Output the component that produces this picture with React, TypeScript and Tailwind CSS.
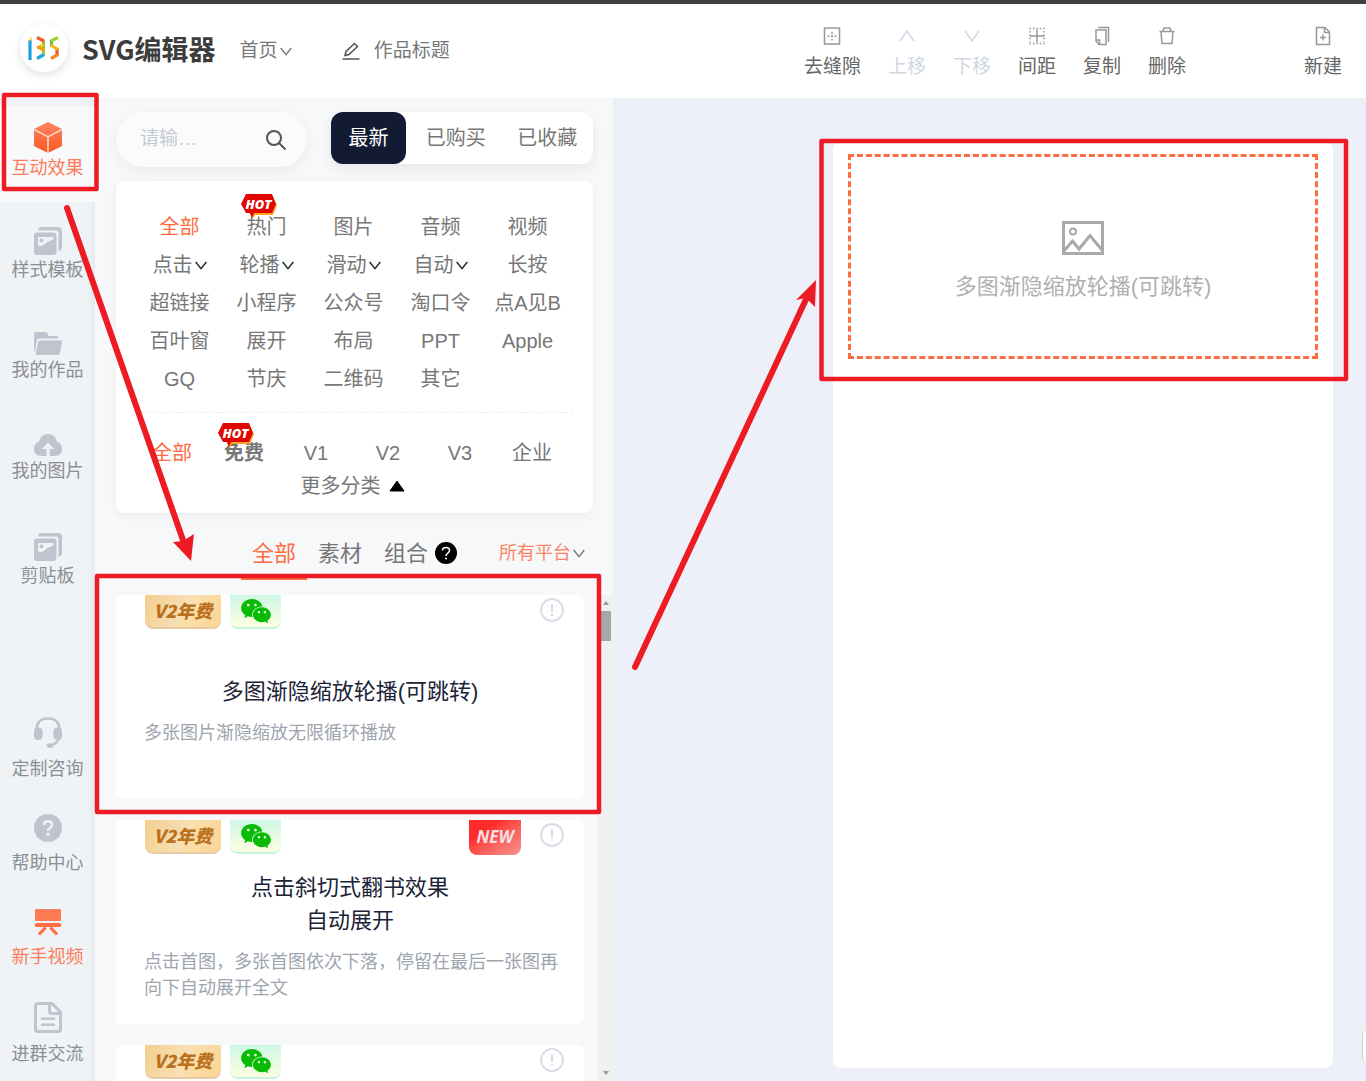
import { useState } from "react";
import type { ReactNode } from "react";
import clsx from "clsx";
import { AiFillWechat } from "react-icons/ai";

const CATEGORIES = [
  { label: "全部" },
  { label: "热门", hot: true },
  { label: "图片" },
  { label: "音频" },
  { label: "视频" },
  { label: "点击", menu: true },
  { label: "轮播", menu: true },
  { label: "滑动", menu: true },
  { label: "自动", menu: true },
  { label: "长按" },
  { label: "超链接" },
  { label: "小程序" },
  { label: "公众号" },
  { label: "淘口令" },
  { label: "点A见B" },
  { label: "百叶窗" },
  { label: "展开" },
  { label: "布局" },
  { label: "PPT" },
  { label: "Apple" },
  { label: "GQ" },
  { label: "节庆" },
  { label: "二维码" },
  { label: "其它" },
];

const LEVELS = ["全部", "免费", "V1", "V2", "V3", "企业"];

const EFFECTS = [
  {
    id: 1,
    title: ["多图渐隐缩放轮播(可跳转)"],
    desc: "多张图片渐隐缩放无限循环播放",
    isNew: false,
  },
  {
    id: 2,
    title: ["点击斜切式翻书效果", "自动展开"],
    desc: "点击首图，多张首图依次下落，停留在最后一张图再向下自动展开全文",
    isNew: true,
  },
  { id: 3, title: [], desc: "", isNew: false },
];

function Chevron({ className }: { className?: string }) {
  return (
    <svg viewBox="0 0 12 9" className={clsx("h-[9px] w-3 shrink-0", className)} fill="none" stroke="currentColor">
      <path d="M0.7 1 L6 7.6 L11.3 1" strokeWidth="1.4" />
    </svg>
  );
}

function HotBadge({ className }: { className?: string }) {
  return (
    <svg viewBox="0 0 36 25" className={clsx("absolute h-[25px] w-9", className)} aria-label="HOT">
      <path d="M6 2 H31.5 L36 11 L32 21 H14 L11.5 25 L9 20 Z" fill="#f6a623" />
      <path d="M5 0 H31 L35 10 L31 19 H13 L11 24 L9 19 H5 L0 10 Z" fill="#e10602" />
      <text
        x="17.5"
        y="14.5"
        textAnchor="middle"
        fill="#fff"
        fontSize="13"
        fontWeight="800"
        fontStyle="italic"
        fontFamily="Open Sans, sans-serif"
      >
        HOT
      </text>
    </svg>
  );
}

function Logo() {
  return (
    <div className="mb-1.5 flex size-12 items-center justify-center rounded-full bg-white shadow-[0_3px_8px_rgba(0,0,0,0.12)]">
      <svg viewBox="0 0 32 24" className="h-6 w-8" fill="none" strokeWidth="3.200">
        <path d="M2 4 V24" stroke="#1d9de8" />
        <path d="M0.500 5 L3.500 0.500 V4.500 Z" fill="#f8c90e" stroke="none" />
        <path d="M15.500 4 V12" stroke="#8cc63f" />
        <path d="M15.500 12 V20" stroke="#a3cf3a" />
        <path d="M9 1.500 L16 5" stroke="#f0592b" />
        <path d="M9 12.500 L15.500 8.500" stroke="#f8c90e" />
        <path d="M9.500 10.500 L16 14.500" stroke="#f39a1e" />
        <path d="M16 18.500 L9 22.500" stroke="#21a6d9" />
        <path d="M23.500 4 V11" stroke="#5dba47" />
        <path d="M30 1.500 L23 5" stroke="#a3cf3a" />
        <path d="M29 12 V20" stroke="#ef4a2b" />
        <path d="M22.500 9 L30 13.500" stroke="#f6b81a" />
        <path d="M30 18.500 L23 22.500" stroke="#f2862a" />
      </svg>
    </div>
  );
}

const cubeIcon = (
  <svg viewBox="0 0 28 31" className="h-[31px] w-7">
    <defs>
      <linearGradient id="cube" x1="0" y1="0" x2="0" y2="1">
        <stop offset="0" stopColor="#fd8663" />
        <stop offset="1" stopColor="#fd561f" />
      </linearGradient>
    </defs>
    <path d="M14 0 L28 7 V24 L14 31 L0 24 V7 Z" fill="url(#cube)" />
    <path d="M0 7.5 L14 15 L28 7.5 M14 15 V31" stroke="#fbd9cd" strokeWidth="1.5" fill="none" />
  </svg>
);

const albumIcon = (
  <svg viewBox="0 0 28 28" className="size-7" fill="#c0c4ce">
    <path d="M7 0 H24 Q28 0 28 4 V20 Q28 23 24.5 24 V6 Q24.5 3.5 22 3.5 H4 Q4.5 0 7 0 Z" />
    <path
      fillRule="evenodd"
      d="M3 5.5 H19.5 Q22.5 5.5 22.5 8.5 V25 Q22.5 28 19.5 28 H3 Q0 28 0 25 V8.5 Q0 5.5 3 5.5 Z M4 10 V18 Q8 21 12 16 Q14.500 14 19.500 12.500 V10 Z"
    />
    <circle cx="7.5" cy="13.5" r="2" />
  </svg>
);

const folderIcon = (
  <svg viewBox="0 0 28 23" className="h-[23px] w-7" fill="#c0c4ce">
    <path d="M0 1.500 Q0 0 1.500 0 H11 Q13 0 13.500 1.500 L14.500 4 H23 Q24.500 4 24.500 6.500 H5 Q3.500 6.500 3 8 L1 19 H0 Z" />
    <path d="M6 8.500 H26.500 Q28.300 8.500 28 10.500 L25.800 21 Q25.400 23 23.500 23 H2.500 Q1.500 23 1.700 21.500 L4 10.500 Q4.500 8.500 6 8.500 Z" />
  </svg>
);

const cloudIcon = (
  <svg viewBox="0 0 28 22" className="h-[22px] w-7" fill="#c0c4ce">
    <path d="M12.500 22 H7 Q0 22 0 15 Q0 9 5 7.500 Q7 0 14 0 Q21 0 23 7.500 Q28 9 28 15 Q28 22 21 22 H15.800 V15 H20 L14 8.500 L8 15 H12.500 Z" />
  </svg>
);

const headsetIcon = (
  <svg viewBox="0 0 28 31" className="h-[31px] w-7">
    <path d="M2.500 14 V12 Q3 1.500 14 1.500 Q25 1.500 25.500 12 V20 Q24 26 17 28.500" fill="none" stroke="#c0c4ce" strokeWidth="2.500" />
    <rect x="0" y="10.500" width="8.500" height="12.500" rx="4" fill="#c0c4ce" />
    <rect x="19.500" y="10.500" width="8.500" height="12.500" rx="4" fill="#c0c4ce" />
    <ellipse cx="16" cy="28.500" rx="3.500" ry="2.300" fill="#c0c4ce" />
  </svg>
);

const helpIcon = (
  <svg viewBox="0 0 28 28" className="size-7">
    <circle cx="14" cy="14" r="14" fill="#c0c4ce" />
    <path d="M10 11 Q10 7.300 14 7.300 Q18 7.300 18 10.800 Q18 12.800 15.800 14 Q14 15 14 16.800" fill="none" stroke="#eff3f5" strokeWidth="2.600" />
    <circle cx="14" cy="20.300" r="1.700" fill="#eff3f5" />
  </svg>
);

const boardIcon = (
  <svg viewBox="0 0 26 27" className="h-[27px] w-[26px]">
    <rect width="26" height="12" rx="1" fill="#fd7a55" />
    <rect y="14" width="26" height="4" rx="1.500" fill="#fd6c42" />
    <path d="M10.500 18.500 L4 25.500 M15.500 18.500 L22 25.500" stroke="#fd6c42" strokeWidth="3.200" />
  </svg>
);

const docIcon = (
  <svg viewBox="0 0 28 31" className="h-[31px] w-7" fill="none" stroke="#c0c4ce" strokeWidth="3">
    <path d="M17 1.500 H4 Q1.500 1.500 1.500 4 V27 Q1.500 29.500 4 29.500 H24 Q26.500 29.500 26.500 27 V10 L18 1.500 Z" strokeLinejoin="round" />
    <path d="M15.500 2 V9 Q15.500 11.500 18 11.500 H26" />
    <path d="M8 16.800 H20 M8 22.800 H20" strokeLinecap="round" strokeWidth="2.500" />
  </svg>
);

const MAIN_NAV = [
  { label: "互动效果", icon: cubeIcon, active: true },
  { label: "样式模板", icon: albumIcon },
  { label: "我的作品", icon: folderIcon },
  { label: "我的图片", icon: cloudIcon },
  { label: "剪贴板", icon: albumIcon },
];

const HELP_NAV = [
  { label: "定制咨询", icon: headsetIcon },
  { label: "帮助中心", icon: helpIcon },
  { label: "新手视频", icon: boardIcon, active: true },
  { label: "进群交流", icon: docIcon },
];

const TOOLS = [
  {
    label: "去缝隙",
    icon: (
      <>
        <rect x="2.500" y="2" width="15" height="16" />
        <path d="M10 6 V14.500 M5.500 10 H15" strokeDasharray="2 1.500" />
      </>
    ),
  },
  { label: "上移", disabled: true, icon: <path d="M3 15 L10 5 L17 15" /> },
  { label: "下移", disabled: true, icon: <path d="M3 5 L10 15 L17 5" /> },
  {
    label: "间距",
    icon: (
      <>
        <path d="M10 3.500 V16.500 M3 10 H17" />
        <path d="M2.500 2.500 H18 M2.500 17.500 H18 M3 5 V16 M17 5 V16" strokeDasharray="1.500 1.900" />
      </>
    ),
  },
  {
    label: "复制",
    icon: (
      <>
        <path d="M4 4 H14 V18.500 H7 L4 15 Z M4 14 H7.500 V18" />
        <path d="M6 1.500 H16.500 V16" />
      </>
    ),
  },
  {
    label: "删除",
    icon: <path d="M2.500 5.500 H17.500 M6 5.500 L7 2 H13 L14 5.500 M4 5.500 L5 17.500 H15 L16 5.500" />,
  },
];

const newFileIcon = (
  <>
    <path d="M3.500 1.500 H12 L16.500 6 V18.500 H3.500 Z M11.500 1.500 V6.500 H16.500" />
    <path d="M10 8.500 V14.500 M7 11.500 H13" />
  </>
);

function ToolButton({ label, icon, disabled }: { label: string; icon: ReactNode; disabled?: boolean }) {
  return (
    <button
      disabled={disabled}
      className={clsx("flex flex-col items-center gap-[7px]", disabled ? "text-[#cfd8e2]" : "text-[#666]")}
    >
      <svg
        viewBox="0 0 20 20"
        className={clsx("size-5", !disabled && "text-[#999]")}
        fill="none"
        stroke="currentColor"
        strokeWidth="1.500"
      >
        {icon}
      </svg>
      <span className="text-[19px] leading-7">{label}</span>
    </button>
  );
}

function NavItem({ label, icon, active }: { label: string; icon: ReactNode; active?: boolean }) {
  return (
    <>
      {icon}
      <span className={clsx("text-[18px] leading-[30px]", active ? "text-[#fc7b5b]" : "text-[#8b8f94]")}>
        {label}
      </span>
    </>
  );
}

function EffectCard({ title, desc, isNew }: { title: string[]; desc: string; isNew: boolean }) {
  return (
    <article className="flex h-[204px] shrink-0 flex-col rounded-md bg-white">
      <div className="flex items-start gap-[9px] pr-5 pl-[29px]">
        <span className="h-[34px] w-[76px] rounded-b-lg border-b-2 border-[#e6cba6] bg-[linear-gradient(115deg,#f3cf8d_0%,#f8e0b8_55%,#fbdfa8_56%,#fad596_100%)] text-center font-['Noto_Sans_CJK_SC',sans-serif] text-[18px] leading-[30px] font-black whitespace-nowrap text-[#b9701f] italic">
          V2年费
        </span>
        <span className="flex h-[34px] w-[51px] items-center justify-center rounded-b-lg border-b-2 border-[#c9f2de] bg-linear-to-b from-[#cdf8e6] to-[#fdfde0]">
          <AiFillWechat className="size-[34px] text-[#09bb07]" />
        </span>
        <span className="flex-1" />
        {isNew && (
          <span className="mr-2.5 h-[35px] w-[52px] rounded-b-lg bg-linear-to-br from-[#fe2b2b] from-30% to-[#f49090] text-center font-['Open_Sans',sans-serif] text-[17px] leading-[34px] font-bold text-[#f3dfe2] italic">
            NEW
          </span>
        )}
        <button aria-label="说明" className="mt-[3px] text-[#d9dee8]">
          <svg viewBox="0 0 24 24" className="size-6" fill="none" stroke="currentColor" strokeWidth="2">
            <circle cx="12" cy="12" r="11" />
            <path d="M12 6 V14 M12 16 V18" />
          </svg>
        </button>
      </div>
      {title.length > 0 && (
        <div className="flex flex-1 flex-col justify-center gap-3 pr-6 pb-2 pl-7">
          <h3 className="pr-1 text-center text-[22px] leading-[33px] text-[#1b2337]">
            {title.map((line) => (
              <span key={line} className="block">
                {line}
              </span>
            ))}
          </h3>
          <p className="text-[18px] leading-[26px] text-[#9ea5ae]">{desc}</p>
        </div>
      )}
    </article>
  );
}

function Annotations() {
  return (
    <svg
      className="pointer-events-none absolute inset-0 h-full w-full"
      fill="none"
      stroke="#ed1c24"
      strokeWidth="4.500"
      strokeLinejoin="round"
    >
      <rect x="4" y="95" width="92.500" height="94" />
      <rect x="97" y="576" width="502" height="236" />
      <rect x="821.500" y="141" width="524.500" height="238" />
      <path d="M67 208 L184 543" strokeWidth="6" strokeLinecap="round" />
      <path d="M191 561 L173 542 L183 541 L194 534 Z" fill="#ed1c24" stroke="none" />
      <path d="M635 667 L808 295" strokeWidth="6" strokeLinecap="round" />
      <path d="M816 280 L796 300 L806 298 L815 307 Z" fill="#ed1c24" stroke="none" />
    </svg>
  );
}

export default function App() {
  const [category, setCategory] = useState("全部");
  const [level, setLevel] = useState("全部");

  return (
    <div className="relative flex h-screen flex-col overflow-hidden bg-[#edf0f8] font-['Liberation_Sans','Noto_Sans_CJK_SC',sans-serif] text-[#777]">
      {/* Header */}
      <header className="flex h-[98px] shrink-0 items-center border-t-4 border-[#404040] bg-white pr-6 pl-5">
        <Logo />
        <h1 className="ml-3.5 pb-1 font-['Noto_Sans_CJK_SC',sans-serif] text-[27px] font-bold whitespace-nowrap text-[#3c3c3c]">
          SVG编辑器
        </h1>
        <button className="ml-6 flex items-center gap-0.5 text-[19px]">
          首页
          <Chevron />
        </button>
        <label className="ml-[50px] flex items-center gap-3.5">
          <svg viewBox="0 0 18 18" className="size-[18px]" fill="none" stroke="#555" strokeWidth="1.500">
            <path d="M0.500 17 H17.500 M3 13.500 L4 9.500 L12.500 1.500 L15.500 4.500 L7 12.500 Z" />
          </svg>
          <input aria-label="作品标题" defaultValue="作品标题" className="w-24 text-[19px] outline-none" />
        </label>
        <div className="ml-auto flex gap-[27px] pt-1">
          {TOOLS.map((tool) => (
            <ToolButton key={tool.label} {...tool} />
          ))}
          <div className="ml-[91px]">
            <ToolButton label="新建" icon={newFileIcon} />
          </div>
        </div>
      </header>

      <div className="flex min-h-0 flex-1">
        {/* Left navigation */}
        <nav className="flex w-[95px] shrink-0 flex-col bg-[#eff3f5] pt-2 shadow-[inset_-12px_0_10px_-8px_rgba(0,0,0,0.04)]">
          <div className="flex flex-col gap-0.5">
            {MAIN_NAV.map((item) => (
              <a
                key={item.label}
                href="#"
                className={clsx(
                  "flex flex-col items-center justify-center",
                  item.active ? "h-24 bg-[#f7f9fa] pb-1" : "h-[100px] pt-1"
                )}
              >
                <NavItem {...item} />
              </a>
            ))}
          </div>
          <div className="mt-auto">
            {HELP_NAV.map((item) => (
              <a key={item.label} href="#" className="flex h-[95px] flex-col items-center justify-center gap-1.5 pt-1">
                <NavItem {...item} />
              </a>
            ))}
          </div>
        </nav>

        {/* Effect library */}
        <section className="flex w-[518px] shrink-0 flex-col bg-[#f7f8fa] pt-3.5">
          <div className="flex items-start pr-5 pl-[21px]">
            <div className="flex h-[55px] w-[191px] items-center rounded-full bg-[#fbfbfc] pr-5 pl-6 shadow-[0_4px_14px_rgba(0,0,0,0.06)]">
              <input
                aria-label="搜索"
                placeholder="请输…"
                className="min-w-0 flex-1 text-[19px] outline-none placeholder:text-[#c3c9d3]"
              />
              <button aria-label="搜索">
                <svg viewBox="0 0 22 22" className="size-[22px]" fill="none" stroke="#555" strokeWidth="2">
                  <circle cx="9" cy="9" r="7" />
                  <path d="M14 14 L20.500 20.500" />
                </svg>
              </button>
            </div>
            <div className="ml-6 flex h-[52px] flex-1 items-center rounded-xl bg-white text-[20px] shadow-[0_5px_14px_rgba(0,0,0,0.07)]">
              <button className="h-full w-[75px] rounded-xl bg-[#131b33] text-white">最新</button>
              <button className="flex-1 pl-1">已购买</button>
              <button className="flex-1">已收藏</button>
            </div>
          </div>

          {/* Filters */}
          <div className="mt-3.5 mr-5 ml-[21px] rounded-lg bg-white px-5 pt-[27px] pb-3 text-[20px] shadow-[0_3px_10px_rgba(0,0,0,0.05)]">
            <div className="grid grid-cols-[repeat(5,87px)]">
              {CATEGORIES.map((item) => (
                <button
                  key={item.label}
                  onClick={() => setCategory(item.label)}
                  className={clsx(
                    "relative flex h-[38px] items-center justify-center gap-0.5 whitespace-nowrap",
                    category === item.label && "text-[#fd6c42]"
                  )}
                >
                  {item.label}
                  {item.menu && <Chevron className="text-[#222]" />}
                  {item.hot && <HotBadge className="-top-3.5 left-[18px]" />}
                </button>
              ))}
            </div>
            <div className="mt-3.5 border-t border-dashed border-[#eee]" />
            <div className="mt-[22px] flex">
              {LEVELS.map((item) => (
                <button
                  key={item}
                  onClick={() => setLevel(item)}
                  className={clsx(
                    "relative h-9 w-[72px]",
                    level === item && "text-[#fd6c42]",
                    item === "免费" && "font-bold"
                  )}
                >
                  {item}
                  {item === "免费" && <HotBadge className="-top-3 left-2.5" />}
                </button>
              ))}
            </div>
            <button className="mx-auto flex h-[30px] items-center gap-2 pr-1">
              更多分类
              <svg viewBox="0 0 16 12" className="h-3 w-4">
                <path d="M8 1 L15 11 H1 Z" fill="#000" stroke="#000" strokeLinejoin="round" />
              </svg>
            </button>
          </div>

          {/* Material type tabs */}
          <div className="mt-[13px] mr-5 ml-[21px] flex h-[54px] items-center pl-[125px] text-[22px]">
            <button className="h-full w-[66px] border-b-3 border-[#fd6c42] pt-1 text-[#fd6c42]">全部</button>
            <button className="w-[66px]">素材</button>
            <button className="w-[66px]">组合</button>
            <svg viewBox="0 0 22 22" className="-ml-1 size-[22px]">
              <circle cx="11" cy="11" r="11" fill="#000" />
              <path d="M7.500 8.500 Q7.500 5.500 11 5.500 Q14.500 5.500 14.500 8.500 Q14.500 10 12.500 11.300 Q11 12.300 11 14" fill="none" stroke="#fff" strokeWidth="1.500" />
              <circle cx="11" cy="16.500" r="1" fill="#fff" />
            </svg>
            <label className="ml-auto flex items-center gap-0.5 pr-2">
              <select aria-label="平台" className="appearance-none text-[18px] text-[#fc8464] outline-none">
                <option>所有平台</option>
              </select>
              <Chevron />
            </label>
          </div>

          {/* Effect list */}
          <div className="mt-[15px] flex min-h-0 flex-1">
            <div className="flex flex-1 flex-col gap-[21px] overflow-hidden pr-3.5 pl-[21px]">
              {EFFECTS.map((effect) => (
                <EffectCard key={effect.id} {...effect} />
              ))}
            </div>
            <div className="flex w-[15px] flex-col items-center bg-[#f0f0f0] py-1.5">
              <svg viewBox="0 0 6 4" className="h-1 w-1.5">
                <path d="M3 0 L6 4 H0 Z" fill="#999" />
              </svg>
              <div className="mt-1.5 h-[30px] w-[11px] bg-[#a8a8a8]" />
              <svg viewBox="0 0 6 4" className="mt-auto h-1 w-1.5">
                <path d="M3 4 L6 0 H0 Z" fill="#999" />
              </svg>
            </div>
          </div>
        </section>

        {/* Canvas */}
        <main className="flex flex-1 justify-end pt-11 pr-[33px] pb-[13px]">
          <div className="w-[500px] rounded-lg bg-white px-[15px] pt-3">
            <div className="flex h-[205px] flex-col items-center justify-center gap-4 border-3 border-dashed border-[#fd6c42] pt-2.5 text-[#b0b0b0]">
              <svg viewBox="0 0 42 34" className="h-[34px] w-[42px]" fill="none" stroke="#a9a9a9">
                <rect x="1.500" y="1.500" width="39" height="31" strokeWidth="3" />
                <circle cx="11" cy="10.500" r="3" strokeWidth="2" />
                <path d="M2 30 L10.500 20 L17 28 L28 14.500 L40 29" strokeWidth="3" />
              </svg>
              <p className="text-[22px] leading-8">多图渐隐缩放轮播(可跳转)</p>
            </div>
          </div>
        </main>
      </div>

      <div className="absolute right-0 bottom-5 h-[30px] w-1 rounded-l-sm border-l border-[#ccc] bg-white" />
      <Annotations />
    </div>
  );
}
